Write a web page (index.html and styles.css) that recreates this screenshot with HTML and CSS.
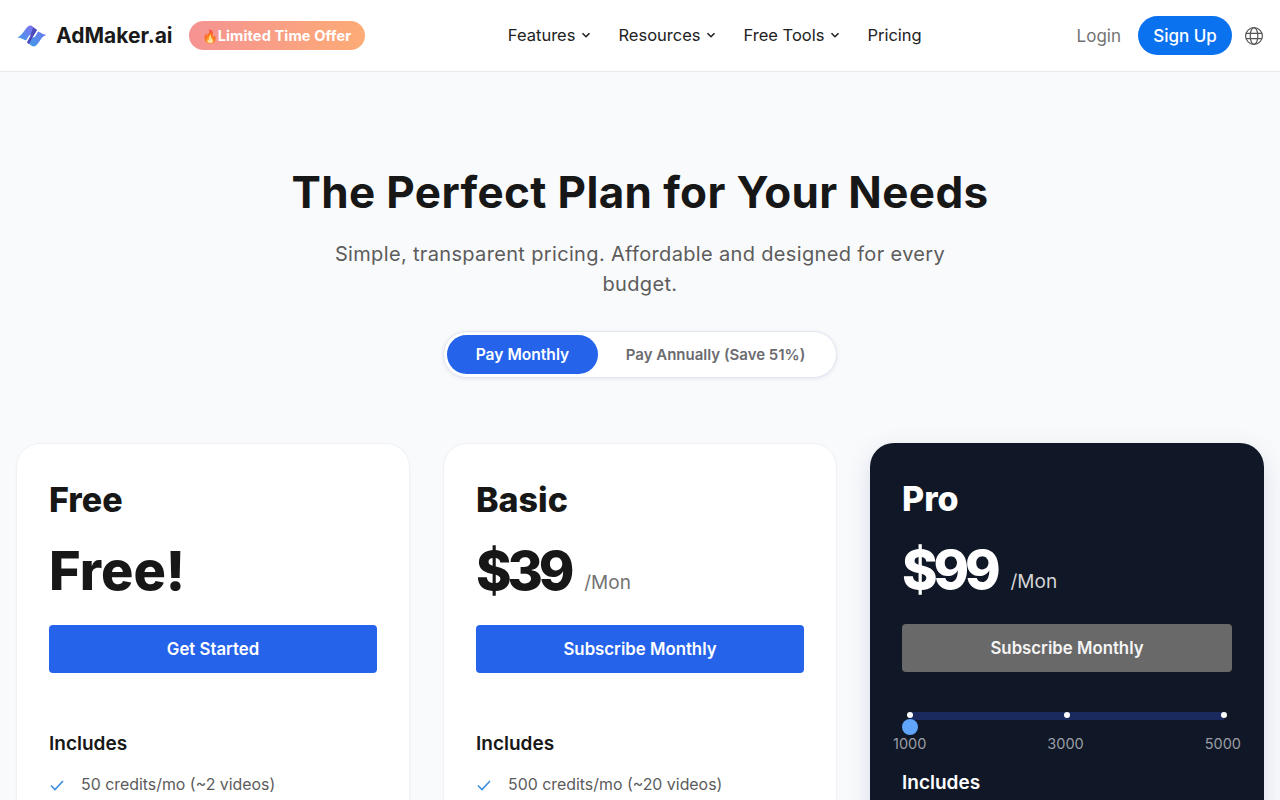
FILE: index.html
```html
<!DOCTYPE html>
<html lang="en">
<head>
    <meta charset="UTF-8">
    <meta name="viewport" content="width=device-width, initial-scale=1.0">
    <title>AdMaker.ai Pricing</title>
    <link rel="stylesheet" href="styles.css">
</head>
<body>
    <header class="topbar">
        <div class="topbar-left">
            <a href="#" class="logo">
                <svg class="logo-mark" width="30" height="22" viewBox="0 0 30 22">
                    <defs>
                        <linearGradient id="logoA" x1="0" y1="1" x2="1" y2="0">
                            <stop offset="0" stop-color="#3f9be8"/>
                            <stop offset="1" stop-color="#8a6cf0"/>
                        </linearGradient>
                        <linearGradient id="logoB" x1="1" y1="0" x2="0" y2="1">
                            <stop offset="0" stop-color="#6d78ee"/>
                            <stop offset="1" stop-color="#3f9be8"/>
                        </linearGradient>
                    </defs>
                    <path d="M0 12.5 C4 11.5 7 6 9.5 3 C11 1 13 0 15 1 L20 5 L16 11 C14 9.5 12.5 10 11.5 11.5 L9 15.5 C6 14 3 12.5 0 12.5 Z" fill="url(#logoA)"/>
                    <path d="M29.5 10 C25.5 10.5 23 16 20.5 19 C19 21 17 22 15 21 L10 17.5 L14 11.5 C15.5 13 17.5 12.5 18.5 11 L21 6.5 C24 8 27 9.5 29.5 10 Z" fill="url(#logoB)"/>
                    <path d="M16 2.5 L20 5 L15.5 12.5 L12 19 L10 17.5 L13.5 10.5 Z" fill="#4c4ab8"/>
                </svg>
                <span>AdMaker.ai</span>
            </a>
            <a href="#" class="offer"><span class="offer-fire">🔥</span>Limited Time Offer</a>
        </div>
        <nav class="topnav">
            <a href="#">Features <svg class="chev" width="10" height="10" viewBox="0 0 10 10"><path d="M1.5 3.2 L5 6.7 L8.5 3.2"/></svg></a>
            <a href="#">Resources <svg class="chev" width="10" height="10" viewBox="0 0 10 10"><path d="M1.5 3.2 L5 6.7 L8.5 3.2"/></svg></a>
            <a href="#">Free Tools <svg class="chev" width="10" height="10" viewBox="0 0 10 10"><path d="M1.5 3.2 L5 6.7 L8.5 3.2"/></svg></a>
            <a href="#">Pricing</a>
        </nav>
        <div class="topbar-right">
            <a href="#" class="login">Login</a>
            <a href="#" class="signup">Sign Up</a>
            <svg class="globe" width="20" height="20" viewBox="0 0 20 20">
                <circle cx="10" cy="10" r="8.4"/>
                <ellipse cx="10" cy="10" rx="3.8" ry="8.4"/>
                <path d="M2 7.3 H18 M2 12.7 H18"/>
            </svg>
        </div>
    </header>

    <main>
        <section class="hero">
            <h1>The Perfect Plan for Your Needs</h1>
            <p>Simple, transparent pricing. Affordable and designed for every budget.</p>
            <div class="billing">
                <button class="billing-opt active">Pay Monthly</button>
                <button class="billing-opt">Pay Annually (Save 51%)</button>
            </div>
        </section>

        <section class="plans">
            <div class="plan">
                <h2>Free</h2>
                <div class="price"><strong>Free!</strong></div>
                <a href="#" class="plan-btn">Get Started</a>
                <h4>Includes</h4>
                <ul>
                    <li><svg width="16" height="16" viewBox="0 0 16 16"><path d="M2 8.5 L6 12.5 L14 4"/></svg>50 credits/mo (~2 videos)</li>
                </ul>
            </div>
            <div class="plan">
                <h2>Basic</h2>
                <div class="price"><strong class="amount">$39</strong><span>/Mon</span></div>
                <a href="#" class="plan-btn">Subscribe Monthly</a>
                <h4>Includes</h4>
                <ul>
                    <li><svg width="16" height="16" viewBox="0 0 16 16"><path d="M2 8.5 L6 12.5 L14 4"/></svg>500 credits/mo (~20 videos)</li>
                </ul>
            </div>
            <div class="plan plan-pro">
                <h2>Pro</h2>
                <div class="price"><strong class="amount">$99</strong><span>/Mon</span></div>
                <a href="#" class="plan-btn">Subscribe Monthly</a>
                <div class="slider">
                    <div class="slider-track">
                        <i class="stop stop-a"></i>
                        <i class="stop stop-b"></i>
                        <i class="stop stop-c"></i>
                        <i class="thumb"></i>
                    </div>
                    <div class="slider-labels">
                        <span>1000</span>
                        <span>3000</span>
                        <span>5000</span>
                    </div>
                </div>
                <h4>Includes</h4>
            </div>
        </section>
    </main>
</body>
</html>
```
FILE: styles.css
```css
* {
    box-sizing: border-box;
}
html, body {
    height: 800px;
    overflow: hidden;
}
body {
    margin: 0;
    background-color: #f9fafb;
    color: #171717;
    font-family: Inter, "Liberation Sans", sans-serif;
}
a {
    text-decoration: none;
    color: inherit;
}

.topbar {
    height: 72px;
    padding: 0 16px 0 17px;
    background-color: #fff;
    border-bottom: 1px solid #e7ebf0;
    display: flex;
    align-items: center;
    justify-content: space-between;
}
.topbar-left {
    width: 348px;
    display: flex;
    align-items: center;
}
.logo {
    display: flex;
    align-items: center;
    gap: 9px;
    font-size: 21px;
    font-weight: 700;
    color: #1a1a1a;
}
.offer {
    margin-left: 16px;
    width: 176px;
    height: 29px;
    padding-left: 13px;
    display: flex;
    align-items: center;
    border-radius: 15px;
    background: linear-gradient(90deg, #f59393, #fdab76);
    color: #fff;
    font-size: 14.6px;
    font-weight: 700;
    letter-spacing: 0.1px;
    white-space: nowrap;
}
.offer-fire {
    font-size: 13px;
    opacity: 0.8;
}
.topnav {
    margin-right: 12px;
    padding-bottom: 2px;
    display: flex;
    gap: 27px;
    font-size: 16.5px;
    font-weight: 400;
    color: #222;
}
.topnav a {
    display: flex;
    align-items: center;
    gap: 6px;
}
.chev path {
    fill: none;
    stroke: #222;
    stroke-width: 1.6;
}
.topbar-right {
    display: flex;
    align-items: center;
}
.login {
    font-size: 17px;
    color: #737373;
}
.signup {
    margin-left: 17px;
    width: 94px;
    height: 39px;
    border-radius: 20px;
    background-color: #0a72ef;
    color: #fff;
    font-size: 17px;
    font-weight: 500;
    display: flex;
    align-items: center;
    justify-content: center;
}
.globe {
    margin-left: 12px;
    fill: none;
    stroke: #555;
    stroke-width: 1.2;
}

.hero {
    text-align: center;
    padding-top: 93px;
}
.hero h1 {
    margin: 0;
    font-size: 44px;
    line-height: 54px;
    font-weight: 700;
    letter-spacing: 0.36px;
    color: #171717;
}
.hero p {
    width: 640px;
    margin: 20px auto 0;
    font-size: 20px;
    line-height: 30px;
    letter-spacing: 0.34px;
    color: #5c5c5c;
}
.billing {
    width: 394px;
    height: 47px;
    margin: 32px auto 0;
    padding: 3px;
    background-color: #fff;
    border: 1px solid #e2e6ee;
    border-radius: 24px;
    box-shadow: 0 1px 4px rgba(60, 80, 160, 0.12);
    display: flex;
}
.billing-opt {
    border: none;
    background: none;
    font-family: inherit;
    font-size: 15px;
    font-weight: 600;
    color: #6b6b70;
    border-radius: 20px;
    flex: 1;
}
.billing-opt.active {
    flex: 0 0 151px;
    background-color: #2563eb;
    color: #fff;
    font-size: 15.6px;
}

.plans {
    margin-top: 65px;
    padding: 0 16px;
    display: grid;
    grid-template-columns: 394px 394px 394px;
    justify-content: space-between;
    align-items: start;
}
.plan {
    height: 500px;
    padding: 33px 32px 32px;
    background-color: #fff;
    border: 1px solid #eff1f4;
    border-radius: 24px;
    box-shadow: 0 1px 3px rgba(0, 0, 0, 0.03);
}
.plan h2 {
    margin: 0;
    font-size: 34px;
    line-height: 46px;
    font-weight: 800;
}
.price {
    height: 60px;
    margin-top: 18px;
    display: flex;
    align-items: center;
}
.price strong {
    font-size: 54px;
    font-weight: 800;
    line-height: 60px;
}
.price .amount {
    letter-spacing: -4.2px;
}
.price span {
    margin: 22px 0 0 14px;
    font-size: 19px;
    color: #737373;
}
.plan-btn {
    margin-top: 24px;
    height: 48px;
    border-radius: 4px;
    background-color: #2563eb;
    color: #fff;
    font-size: 16.8px;
    font-weight: 600;
    display: flex;
    align-items: center;
    justify-content: center;
}
.plan h4 {
    margin: 58px 0 0;
    font-size: 19px;
    line-height: 26px;
    font-weight: 600;
}
.plan ul {
    margin: 15px 0 0;
    padding: 0;
    list-style: none;
}
.plan li {
    display: flex;
    align-items: center;
    gap: 16px;
    font-size: 15.9px;
    line-height: 26px;
    color: #5c5c5c;
}
.plan li svg {
    fill: none;
    stroke: #3b8fe0;
    stroke-width: 1.6;
}

.plan-pro {
    background-color: #101827;
    border: none;
    color: #fff;
    box-shadow: 0 8px 24px rgba(70, 90, 170, 0.18);
}
.plan-pro .price span {
    color: #d4d4d8;
}
.plan-pro .plan-btn {
    background-color: #696969;
    color: #f5f5f5;
}
.plan-pro h4 {
    margin-top: 17px;
}
.slider {
    margin-top: 40px;
}
.slider-track {
    position: relative;
    height: 8px;
    margin: 0 8px;
    background-color: #1a2a5e;
}
.stop {
    position: absolute;
    top: 0;
    width: 6px;
    height: 6px;
    border-radius: 50%;
    background-color: #fff;
}
.stop-a { left: -3px; }
.stop-b { left: calc(50% - 3px); }
.stop-c { left: calc(100% - 3px); }
.thumb {
    position: absolute;
    top: 7px;
    left: -8px;
    width: 16px;
    height: 16px;
    border-radius: 50%;
    background-color: #60a5fa;
}
.slider-labels {
    margin: 15px -9px 0 -9px;
    display: flex;
    justify-content: space-between;
    font-size: 14.5px;
    line-height: 18px;
    color: #9a9da5;
}
```
